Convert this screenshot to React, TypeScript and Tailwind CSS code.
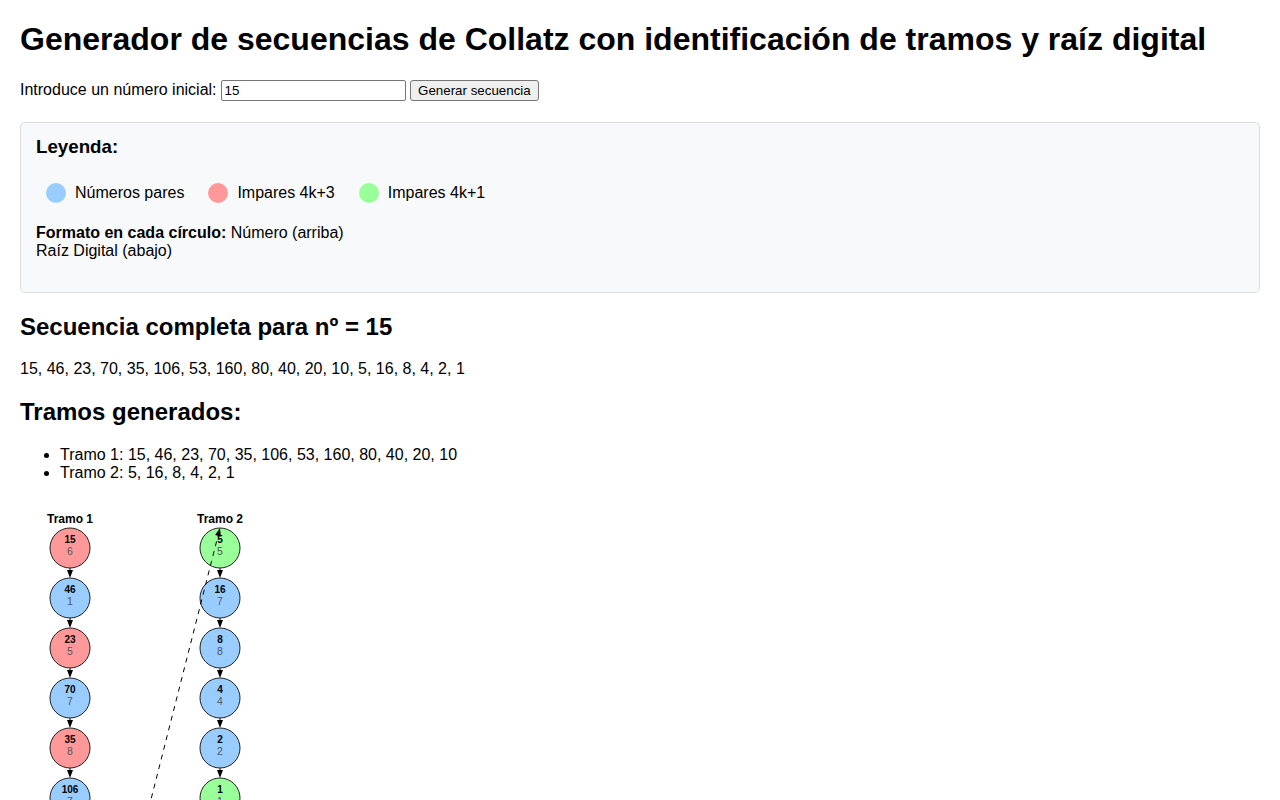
import React, { useState } from 'react';

const collatz = (n: number): number[] => {
  const seq = [n];
  while (n !== 1) {
    n = n % 2 === 0 ? n / 2 : 3 * n + 1;
    seq.push(n);
  }
  return seq;
};

const digitalRoot = (n: number) => (n === 0 ? 0 : 1 + ((n - 1) % 9));

// a new tramo starts when we drop to an odd 4k+1 below the tramo's first number
const splitTramos = (seq: number[]): number[][] => {
  const tramos: number[][] = [];
  let cur: number[] = [];
  seq.forEach((n, i) => {
    cur.push(n);
    const next = seq[i + 1];
    if (next !== undefined && next !== 1 && n % 2 === 0 && next % 4 === 1 && next < cur[0]) {
      tramos.push(cur);
      cur = [];
    }
  });
  if (cur.length) tramos.push(cur);
  return tramos;
};

const fillFor = (n: number) => {
  if (n % 2 === 0) return '#99ccff';
  return n % 4 === 3 ? '#ff9999' : '#99ff99';
};

const Diagram: React.FC<{ tramos: number[][] }> = ({ tramos }) => {
  const colX = (c: number) => 50 + c * 150;
  const rowY = (r: number) => 49 + r * 50;
  const maxLen = Math.max(...tramos.map((t) => t.length));
  const height = rowY(maxLen - 1) + 40;
  const width = colX(tramos.length - 1) + 60;

  const links: { x1: number; y1: number; x2: number; y2: number }[] = [];
  for (let c = 0; c < tramos.length - 1; c++) {
    links.push({
      x1: colX(c),
      y1: rowY(tramos[c].length - 1) + 20,
      x2: colX(c + 1),
      y2: rowY(0) - 20,
    });
  }

  return (
    <svg width={width} height={height} className="block">
      {tramos.map((tramo, c) => (
        <g key={c}>
          <text x={colX(c)} y={24} textAnchor="middle" fontSize={12} fontWeight="bold" fill="#000">
            Tramo {c + 1}
          </text>
          {tramo.map((n, r) => {
            const cx = colX(c);
            const cy = rowY(r);
            return (
              <g key={r}>
                {r < tramo.length - 1 && (
                  <>
                    <line x1={cx} y1={cy + 20} x2={cx} y2={cy + 23} stroke="#000" strokeWidth={1} />
                    <polygon points={`${cx - 3},${cy + 22} ${cx + 3},${cy + 22} ${cx},${cy + 30}`} fill="#000" />
                  </>
                )}
                <circle cx={cx} cy={cy} r={20} fill={fillFor(n)} stroke="#222" strokeWidth={1} />
                <text x={cx} y={cy - 5} textAnchor="middle" fontSize={10} fontWeight="bold" fill="#000">
                  {n}
                </text>
                <text x={cx} y={cy + 6.5} textAnchor="middle" fontSize={10.5} fill="#555">
                  {digitalRoot(n)}
                </text>
              </g>
            );
          })}
        </g>
      ))}
      {links.map((l, i) => {
        const dx = l.x2 - l.x1;
        const dy = l.y2 - l.y1;
        const len = Math.hypot(dx, dy);
        const ux = dx / len;
        const uy = dy / len;
        const bx = l.x2 - ux * 8;
        const by = l.y2 - uy * 8;
        const px = -uy * 3;
        const py = ux * 3;
        return (
          <g key={i}>
            <line x1={l.x1} y1={l.y1} x2={bx} y2={by} stroke="#000" strokeWidth={1} strokeDasharray="5,5" />
            <polygon points={`${bx + px},${by + py} ${bx - px},${by - py} ${l.x2},${l.y2}`} fill="#000" />
          </g>
        );
      })}
    </svg>
  );
};

const App: React.FC = () => {
  const [input, setInput] = useState('15');
  const [start, setStart] = useState(15);

  const seq = collatz(start);
  const tramos = splitTramos(seq);

  const handleGenerate = () => {
    const n = parseInt(input);
    if (n > 0) setStart(n);
  };

  return (
    <div className="min-h-screen bg-white px-[20px] pt-[21.44px] font-['Liberation_Sans',Arial,sans-serif] text-[16px] text-black">
      <h1 className="mb-[21.44px] text-[32px] font-bold leading-[36.8px]">
        Generador de secuencias de Collatz con identificación de tramos y raíz digital
      </h1>

      <div className="flex h-[22px] items-center gap-[4px]">
        <label className="leading-[18.4px]">Introduce un número inicial:</label>
        <input
          type="text"
          value={input}
          onChange={(e) => setInput(e.target.value)}
          className="h-[21px] w-[185px] rounded-[2px] border border-[#767676] bg-white px-[3px] text-[13.33px] font-['Liberation_Sans',Arial,sans-serif]"
        />
        <button
          onClick={handleGenerate}
          className="h-[21px] rounded-[3px] border border-[#767676] bg-[#efefef] px-[7.5px] text-[13.33px] font-['Liberation_Sans',Arial,sans-serif]"
        >
          Generar secuencia
        </button>
      </div>

      <div className="mt-[20px] rounded-[5px] border border-[#dddddd] bg-[#f8f9fa] p-[15px]">
        <h3 className="-mt-[1.5px] mb-[20.22px] text-[18.72px] font-bold leading-[21.5px]">Leyenda:</h3>
        <div className="flex h-[30px] items-center gap-[24px] pl-[10px]">
          <div className="flex items-center gap-[9px]">
            <span className="h-[20px] w-[20px] rounded-full bg-[#99ccff]" />
            <span>Números pares</span>
          </div>
          <div className="flex items-center gap-[9px]">
            <span className="h-[20px] w-[20px] rounded-full bg-[#ff9999]" />
            <span>Impares 4k+3</span>
          </div>
          <div className="flex items-center gap-[9px]">
            <span className="h-[20px] w-[20px] rounded-full bg-[#99ff99]" />
            <span>Impares 4k+1</span>
          </div>
        </div>
        <p className="my-[16px] leading-[18.4px]">
          <strong>Formato en cada círculo:</strong> Número (arriba)
          <br />
          Raíz Digital (abajo)
        </p>
      </div>

      <h2 className="my-[19.92px] text-[24px] font-bold leading-[27.6px]">Secuencia completa para nº = {start}</h2>
      <p className="leading-[18.4px]">{seq.join(', ')}</p>

      <h2 className="my-[19.92px] text-[24px] font-bold leading-[27.6px]">Tramos generados:</h2>
      <ul className="my-[16px] list-disc pl-[40px] leading-[18.4px]">
        {tramos.map((t, i) => (
          <li key={i}>
            Tramo {i + 1}: {t.join(', ')}
          </li>
        ))}
      </ul>

      <Diagram tramos={tramos} />
    </div>
  );
};

export default App;
